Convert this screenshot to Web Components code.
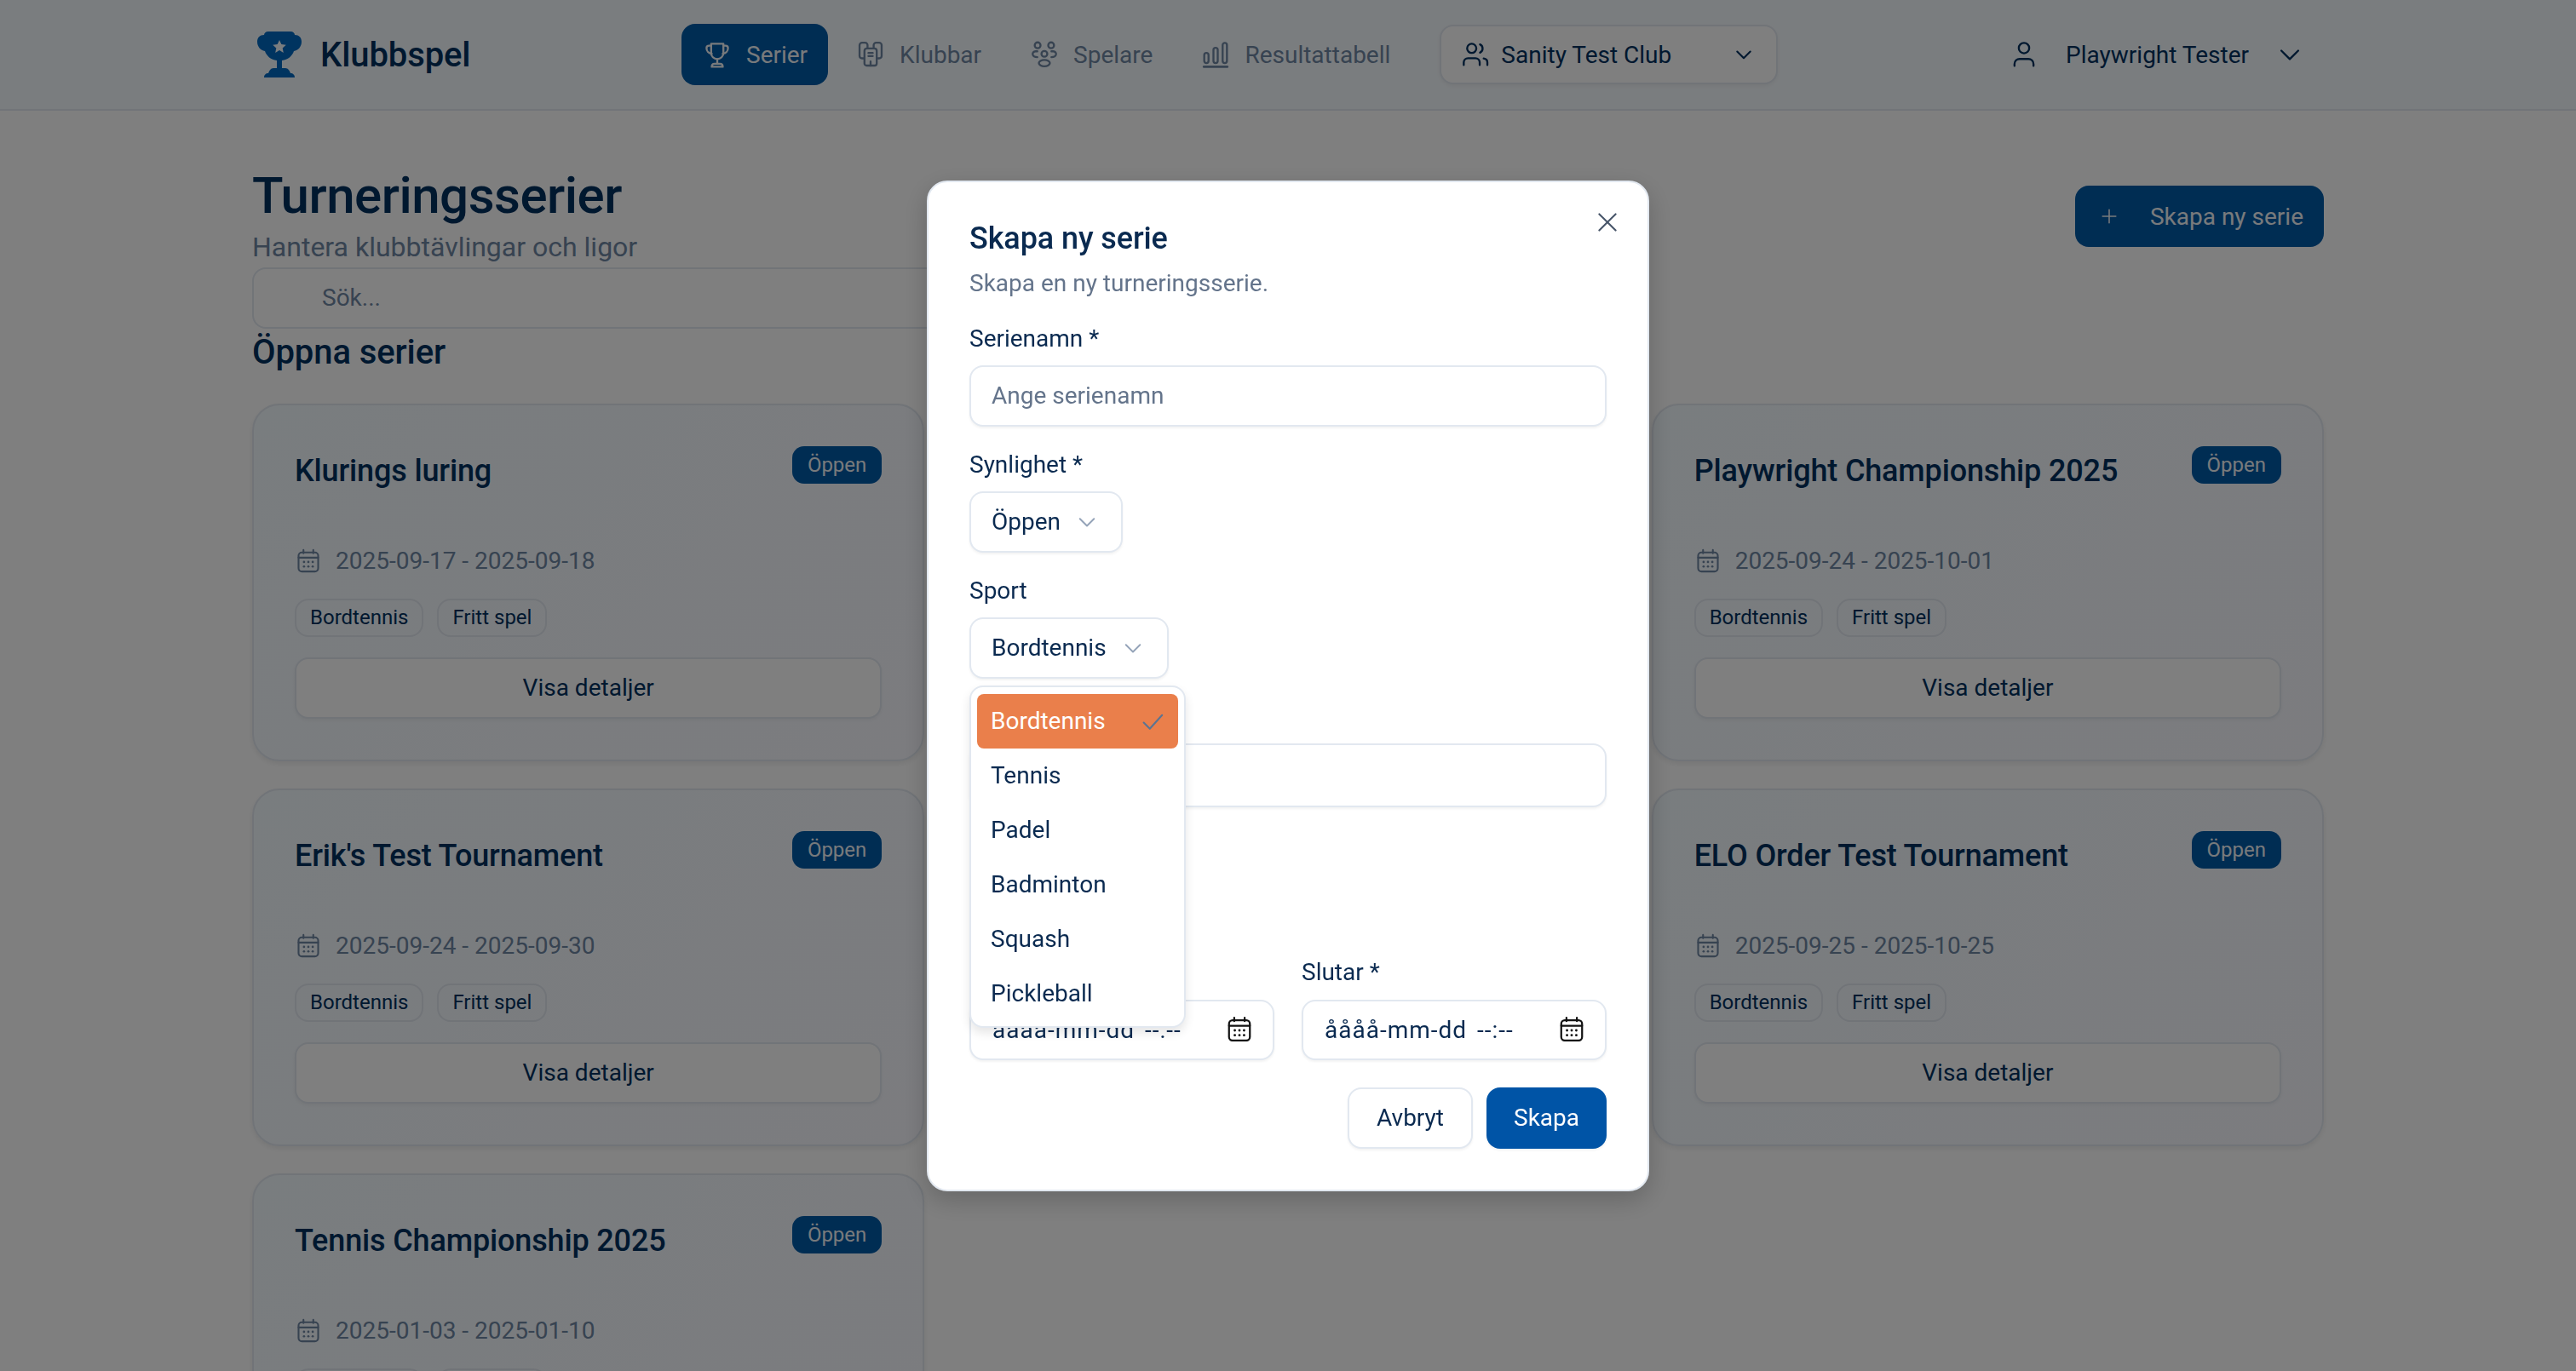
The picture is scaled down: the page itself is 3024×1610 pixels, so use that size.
<!DOCTYPE html>
<html lang="sv">
<head>
<meta charset="utf-8">
<title>Klubbspel</title>
<style>
  html, body { margin: 0; height: 100%; overflow: hidden; background: #fff; }
  body { font-family: Roboto, "Liberation Sans", sans-serif; font-size: 28px; color: #00305f; }
</style>
</head>
<body>
<club-app></club-app>

<script>
const ICONS = {
  trophy: `<path d="M6 3h8v6a4 4 0 0 1-8 0z"/><path d="M6 4.2H4.6A1.6 1.6 0 0 0 3 5.8c0 2 1.4 3.4 3.4 3.6"/><path d="M14 4.2h1.4A1.6 1.6 0 0 1 17 5.8c0 2-1.4 3.4-3.4 3.6"/><path d="M10 13v3"/><path d="M6.4 18c0-1.2.7-2 1.8-2h3.6c1.1 0 1.8.8 1.8 2z"/>`,
  clubs: `<path d="M6 12.5H4.4A1.6 1.6 0 0 1 2.8 11V3.9a1.6 1.6 0 0 1 1.6-1.6h2A1.6 1.6 0 0 1 8 3.9v2"/><path d="M14 12.5h1.6a1.6 1.6 0 0 0 1.6-1.5V3.9a1.6 1.6 0 0 0-1.6-1.6h-2A1.6 1.6 0 0 0 12 3.9v2"/><path d="M6 7.6A1.6 1.6 0 0 1 7.6 6h4.8A1.6 1.6 0 0 1 14 7.6v8.2a1.4 1.4 0 0 1-1.4 1.4H7.4A1.4 1.4 0 0 1 6 15.8z"/><path d="M8.6 9h2.8M8.6 11h2.8M10 14.6v2.6"/>`,
  team: `<circle cx="5.6" cy="4" r="1.9"/><circle cx="14.4" cy="4" r="1.9"/><circle cx="10" cy="9.6" r="1.9"/><path d="M5.4 7.9H4.2C2.9 7.9 2.2 9.1 2.4 10c.3 1.1 1.2 1.7 3 1.7"/><path d="M14.6 7.9h1.2c1.3 0 2 1.2 1.8 2.1-.3 1.1-1.2 1.7-3 1.7"/><ellipse cx="10" cy="15.6" rx="3.6" ry="2.1"/>`,
  bars: `<rect x="2.6" y="9" width="2.8" height="6.6" rx="1.4"/><rect x="8.6" y="5.6" width="2.8" height="10" rx="1.4"/><rect x="14.6" y="2.4" width="2.8" height="13.2" rx="1.4"/><path d="M2.4 18h15.2" stroke-width="1.6"/>`,
  people: `<circle cx="7.6" cy="6" r="3"/><path d="M2.4 16.8v-1.6c0-1.6 1.2-2.8 2.8-2.8h4.8c1.6 0 2.8 1.2 2.8 2.8v1.6"/><path d="M13 3.4a3 3 0 0 1 0 5.4"/><path d="M15.4 12.6c1.4.2 2.4 1.2 2.4 2.6v1.6"/>`,
  person: `<circle cx="10" cy="5.8" r="3.4"/><path d="M3.8 17.4v-1.1c0-2 1.5-3.4 3.4-3.4h5.6c1.9 0 3.4 1.4 3.4 3.4v1.1"/>`,
  chevron: `<path d="M4.5 7.5 10 13l5.5-5.5"/>`,
  plus: `<path d="M10 3.5v13M3.5 10h13"/>`,
  close: `<path d="M4 4l12 12M16 4 4 16"/>`,
  check: `<path d="M3.5 11l4.5 4.5 9-10"/>`,
  calendar: `<rect x="2.8" y="3.6" width="14.4" height="14" rx="2.4"/><path d="M2.8 7.4h14.4M6.4 1.8v2.4M13.6 1.8v2.4"/><g fill="currentColor" stroke="none"><circle cx="6.8" cy="10.6" r=".85"/><circle cx="10" cy="10.6" r=".85"/><circle cx="13.2" cy="10.6" r=".85"/><circle cx="6.8" cy="13.9" r=".85"/><circle cx="10" cy="13.9" r=".85"/><circle cx="13.2" cy="13.9" r=".85"/></g>`,
};

// all elements below are just a shadow root with a fixed render() result
class Base extends HTMLElement {
  connectedCallback() {
    if (this.shadowRoot) return;
    this.attachShadow({ mode: 'open' });
    this.shadowRoot.innerHTML = this.render();
  }
  attr(name, dflt = '') { return this.getAttribute(name) ?? dflt; }
}

class UiIcon extends Base {
  render() {
    const sw = this.attr('weight', '1.3');
    return `<style>
      :host { display: inline-flex; flex: none; width: var(--size, 36px); height: var(--size, 36px); }
      svg { width: 100%; height: 100%; display: block; }
    </style>
    <svg viewBox="0 0 20 20" fill="none" stroke="currentColor" stroke-width="${sw}" stroke-linecap="round" stroke-linejoin="round">${ICONS[this.attr('name')] || ''}</svg>`;
  }
}

class BrandLogo extends Base {
  render() {
    return `<style>
      :host { display: flex; align-items: center; gap: 22px; flex: 0 0 504px; padding-left: 6px; box-sizing: border-box; }
      svg { width: 52px; height: 56px; display: block; color: #0068c0; }
      span { font-size: 40px; font-weight: 500; color: #00305f; letter-spacing: -.1px; }
    </style>
    <svg viewBox="0 0 52 56"><path fill="currentColor" fill-rule="evenodd" d="M13 1H39C42 1 44 3 44 5C49 5 52 8 52 13C52 19 48 23 43 24C41 30 36 34 29 35V44H33C36 44 38 47 39 50C42 50 44 52 44 55H8C8 52 10 50 13 50C14 47 16 44 19 44H23V35C16 34 11 30 9 24C4 23 0 19 0 13C0 8 3 5 8 5C8 3 10 1 13 1ZM26 11L28.3 16.1 33.8 16.7 29.7 20.4 30.8 25.9 26 23.1 21.2 25.9 22.3 20.4 18.2 16.7 23.7 16.1Z"/></svg>
    <span>Klubbspel</span>`;
  }
}

class NavItem extends Base {
  render() {
    const active = this.hasAttribute('active');
    return `<style>
      :host { display: inline-flex; align-items: center; gap: 16px; height: 72px; padding: 0 24px; border-radius: 16px; box-sizing: border-box;
        background: ${active ? '#005aa7' : 'transparent'}; color: ${active ? '#f1f5f9' : '#6f86a3'}; }
    </style>
    <ui-icon name="${this.attr('icon')}"></ui-icon><slot></slot>`;
  }
}

class AppHeader extends Base {
  render() {
    return `<style>
      :host { display: block; height: 130px; box-sizing: border-box; background: #f5fafe; border-bottom: 2px solid #e2e8f0; }
      .in { width: 2432px; margin: 0 auto; height: 128px; display: flex; align-items: center; }
      nav { display: flex; gap: 8px; align-items: center; }
      .club { display: flex; align-items: center; margin-left: 34px; width: 397px; height: 70px; box-sizing: border-box; padding: 0 24px 0 22px;
        gap: 12px; background: #fff; border: 2px solid #e2e8f0; border-radius: 16px; box-shadow: 0 2px 4px rgba(0,0,0,.05); }
      .club b { font-weight: 400; flex: 1; }
      .user { display: flex; align-items: center; margin-left: auto; gap: 31px; padding-right: 22px; }
      .user b { font-weight: 400; }
      .user .ch { margin-left: -1px; --size: 36px; }
      .club .ch { --size: 28px; }
    </style>
    <div class="in">
      <brand-logo></brand-logo>
      <nav>
        <nav-item icon="trophy" active>Serier</nav-item>
        <nav-item icon="clubs">Klubbar</nav-item>
        <nav-item icon="team">Spelare</nav-item>
        <nav-item icon="bars">Resultattabell</nav-item>
      </nav>
      <div class="club"><ui-icon name="people"></ui-icon><b>Sanity Test Club</b><ui-icon class="ch" name="chevron" weight="1.5"></ui-icon></div>
      <div class="user"><ui-icon name="person"></ui-icon><b>Playwright Tester</b><ui-icon class="ch" name="chevron"></ui-icon></div>
    </div>`;
  }
}

class SeriesCard extends Base {
  render() {
    return `<style>
      :host { display: flex; flex-direction: column; height: 420px; box-sizing: border-box; padding: 48px;
        background: linear-gradient(135deg, #f3fafe, #f8f9ff); border: 2px solid #e2e8f0; border-radius: 32px; box-shadow: 0 3px 6px rgba(0,0,0,.08); }
      .top { display: flex; justify-content: space-between; align-items: flex-start; height: 121px; }
      h3 { margin: 4px 0 0; font-size: 36px; font-weight: 500; line-height: 50px; color: #00305f; letter-spacing: -.15px; }
      .badge { font-size: 24px; height: 44px; line-height: 44px; padding: 0 18px; border-radius: 14px; background: #005aa7; color: #f1f5f9; }
      .date { display: flex; align-items: center; gap: 16px; height: 40px; color: #6f86a3; }
      .date ui-icon { --size: 32px; }
      .tags { display: flex; gap: 16px; margin-top: 25px; }
      .tags span { font-size: 24px; height: 45px; line-height: 41px; box-sizing: border-box; padding: 0 16px; border: 2px solid #e2e8f0; border-radius: 16px; }
      .btn { margin-top: 24px; height: 72px; line-height: 68px; box-sizing: border-box; text-align: center; background: #fff; border: 2px solid #e2e8f0; border-radius: 16px; box-shadow: 0 2px 4px rgba(0,0,0,.05); }
    </style>
    <div class="top"><h3>${this.attr('title')}</h3><span class="badge">Öppen</span></div>
    <div class="date"><ui-icon name="calendar"></ui-icon>${this.attr('dates')}</div>
    <div class="tags"><span>Bordtennis</span><span>Fritt spel</span></div>
    <div class="btn">Visa detaljer</div>`;
  }
}

class SeriesPage extends Base {
  render() {
    return `<style>
      :host { display: block; width: 2432px; margin: 0 auto; padding-top: 68px; }
      .head { display: flex; justify-content: space-between; align-items: flex-start; }
      h1 { margin: 0 0 8px; font-size: 60px; line-height: 64px; font-weight: 500; color: #00305f; letter-spacing: -.5px; }
      p { margin: 0; font-size: 32px; line-height: 40px; color: #6f86a3; }
      .create { display: flex; align-items: center; gap: 36px; margin-top: 20px; height: 72px; padding: 0 24px 0 28px; border-radius: 16px; background: #005aa7; color: #f1f5f9; }
      .create ui-icon { --size: 24px; }
      .search { width: 1000px; height: 72px; line-height: 68px; box-sizing: border-box; padding-left: 80px; margin-top: 4px; border: 2px solid #e2e8f0; border-radius: 16px; background: #fff; color: #6f86a3; }
      h2 { margin: 8px 0 40px; font-size: 40px; line-height: 40px; font-weight: 500; color: #00305f; letter-spacing: -.1px; }
      .grid { display: grid; grid-template-columns: repeat(3, 1fr); gap: 32px; }
    </style>
    <div class="head">
      <div><h1>Turneringsserier</h1><p>Hantera klubbtävlingar och ligor</p></div>
      <div class="create"><ui-icon name="plus"></ui-icon>Skapa ny serie</div>
    </div>
    <div class="search">Sök...</div>
    <h2>Öppna serier</h2>
    <div class="grid">
      <series-card title="Klurings luring" dates="2025-09-17 - 2025-09-18"></series-card>
      <div></div>
      <series-card title="Playwright Championship 2025" dates="2025-09-24 - 2025-10-01"></series-card>
      <series-card title="Erik's Test Tournament" dates="2025-09-24 - 2025-09-30"></series-card>
      <div></div>
      <series-card title="ELO Order Test Tournament" dates="2025-09-25 - 2025-10-25"></series-card>
      <series-card title="Tennis Championship 2025" dates="2025-01-03 - 2025-01-10"></series-card>
    </div>`;
  }
}

class SportPopup extends Base {
  render() {
    const items = ['Tennis', 'Padel', 'Badminton', 'Squash', 'Pickleball'];
    return `<style>
      :host { position: absolute; z-index: 5; left: 0; top: 127px; width: 254px; height: 402px; box-sizing: border-box; padding: 8px 7px; background: #fff;
        border: 2px solid #e2e8f0; border-radius: 16px; box-shadow: 0 6px 12px rgba(0,0,0,.1); }
      div { display: flex; align-items: center; justify-content: space-between; height: 64px; padding: 0 16px; border-radius: 8px; color: #0a2a50; }
      .sel { background: #ea7f4b; color: #fff; padding-right: 14px; }
      ui-icon { --size: 32px; color: #5b7492; }
    </style>
    <div class="sel">Bordtennis<ui-icon name="check"></ui-icon></div>
    ${items.map(s => `<div>${s}</div>`).join('')}`;
  }
}

class ModalDialog extends Base {
  render() {
    return `<style>
      :host { position: fixed; inset: 0; z-index: 10; background: rgba(0,0,0,.5); display: flex; align-items: center; justify-content: center; color: #0a2a50; }
      .box { position: relative; width: 848px; height: 1187px; box-sizing: border-box; padding: 48px 48px 0; background: #fff; border: 2px solid #e2e8f0; border-radius: 24px; box-shadow: 0 10px 30px rgba(0,0,0,.2); }
      .close { position: absolute; right: 31px; top: 31px; --size: 32px; color: #475569; }
      h2 { margin: 0; font-size: 36px; line-height: 36px; font-weight: 500; color: #0a2a50; letter-spacing: -.1px; }
      .sub { margin-top: 14px; line-height: 41px; color: #64748b; }
      label { display: block; line-height: 32px; margin-bottom: 15px; font-weight: 400; }
      .field { position: relative; margin-top: 29px; }
      .ctl { box-sizing: border-box; height: 72px; display: flex; align-items: center; padding: 0 24px; background: #fff; border: 2px solid #e2e8f0; border-radius: 16px; box-shadow: 0 2px 3px rgba(0,0,0,.05); }
      .sel { display: inline-flex; gap: 16px; padding-right: 25px; }
      .sel ui-icon { --size: 30px; color: #94a3b8; }
      .ph { color: #64748b; }
      .gap { height: 75px; margin-top: 76px; }
      .dates { display: grid; grid-template-columns: 1fr 1fr; gap: 32px; margin-top: 178px; }
      .dates label { margin-bottom: 16px; }
      .dates .ctl { justify-content: space-between; padding: 0 22px 0 25px; height: 71px; white-space: pre; letter-spacing: 1px; word-spacing: 4px; }
      .dates ui-icon { --size: 34px; color: #111; }
      .btns { display: flex; justify-content: flex-end; gap: 16px; margin-top: 32px; }
      .btn { height: 72px; line-height: 68px; box-sizing: border-box; padding: 0 32px; border-radius: 16px; border: 2px solid #e2e8f0; background: #fff; box-shadow: 0 2px 3px rgba(0,0,0,.05); }
      .btn.pri { background: #0054a6; border: 0; line-height: 72px; color: #fff; }
      .first { margin-top: 29px; }
    </style>
    <div class="box">
      <ui-icon class="close" name="close"></ui-icon>
      <h2>Skapa ny serie</h2>
      <div class="sub">Skapa en ny turneringsserie.</div>
      <div class="field first"><label>Serienamn *</label><div class="ctl ph">Ange serienamn</div></div>
      <div class="field"><label>Synlighet *</label><div class="ctl sel">Öppen<ui-icon name="chevron"></ui-icon></div></div>
      <div class="field"><label>Sport</label><div class="ctl sel">Bordtennis<ui-icon name="chevron"></ui-icon></div>
        <sport-popup></sport-popup></div>
      <div class="ctl gap"></div>
      <div class="dates">
        <div><label>&nbsp;</label><div class="ctl">åååå-mm-dd --:--<ui-icon name="calendar"></ui-icon></div></div>
        <div><label>Slutar *</label><div class="ctl">åååå-mm-dd --:--<ui-icon name="calendar"></ui-icon></div></div>
      </div>
      <div class="btns"><div class="btn">Avbryt</div><div class="btn pri">Skapa</div></div>
    </div>`;
  }
}

class ClubApp extends Base {
  render() {
    return `<style>:host { display: block; height: 1610px; overflow: hidden; }</style>
    <app-header></app-header>
    <series-page></series-page>
    <modal-dialog></modal-dialog>`;
  }
}

customElements.define('ui-icon', UiIcon);
customElements.define('brand-logo', BrandLogo);
customElements.define('nav-item', NavItem);
customElements.define('app-header', AppHeader);
customElements.define('series-card', SeriesCard);
customElements.define('series-page', SeriesPage);
customElements.define('sport-popup', SportPopup);
customElements.define('modal-dialog', ModalDialog);
customElements.define('club-app', ClubApp);
</script>
</body>
</html>
